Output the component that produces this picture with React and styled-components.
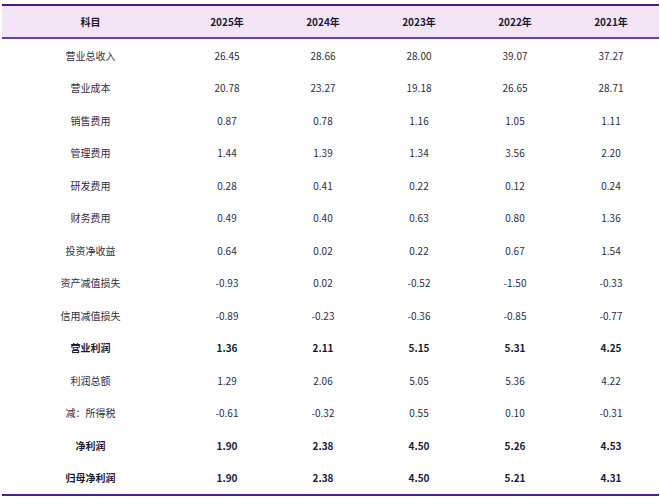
import React from "react"
import styled, {createGlobalStyle} from "styled-components"

const years = ["2025年", "2024年", "2023年", "2022年", "2021年"]

const rows = [
  {label: "营业总收入", values: ["26.45", "28.66", "28.00", "39.07", "37.27"]},
  {label: "营业成本", values: ["20.78", "23.27", "19.18", "26.65", "28.71"]},
  {label: "销售费用", values: ["0.87", "0.78", "1.16", "1.05", "1.11"]},
  {label: "管理费用", values: ["1.44", "1.39", "1.34", "3.56", "2.20"]},
  {label: "研发费用", values: ["0.28", "0.41", "0.22", "0.12", "0.24"]},
  {label: "财务费用", values: ["0.49", "0.40", "0.63", "0.80", "1.36"]},
  {label: "投资净收益", values: ["0.64", "0.02", "0.22", "0.67", "1.54"]},
  {label: "资产减值损失", values: ["-0.93", "0.02", "-0.52", "-1.50", "-0.33"]},
  {label: "信用减值损失", values: ["-0.89", "-0.23", "-0.36", "-0.85", "-0.77"]},
  {label: "营业利润", values: ["1.36", "2.11", "5.15", "5.31", "4.25"], bold: true},
  {label: "利润总额", values: ["1.29", "2.06", "5.05", "5.36", "4.22"]},
  {label: "减：所得税", values: ["-0.61", "-0.32", "0.55", "0.10", "-0.31"]},
  {label: "净利润", values: ["1.90", "2.38", "4.50", "5.26", "4.53"], bold: true},
  {label: "归母净利润", values: ["1.90", "2.38", "4.50", "5.21", "4.31"], bold: true},
]

const GlobalStyle = createGlobalStyle`
  body {
    margin: 0;
    background: #ffffff;
    font-family: "Noto Sans CJK SC", "Noto Sans", sans-serif;
  }
`

const Page = styled.div`
  padding: 4px 0 0 2px;
`

const Table = styled.table`
  width: 657px;
  border-collapse: collapse;
  table-layout: fixed;
  font-size: 10px;
  color: #2e2d44;
  border-bottom: 2px solid #4b1d8f;
`

const HeadRow = styled.tr`
  background: #f3e5f5;
  border-top: 2px solid #4a178c;
  border-bottom: 2px solid #6a3fa3;
`

const HeadCell = styled.th`
  height: 31px;
  padding: 0;
  text-align: center;
  font-weight: 700;
  color: #1c1a33;
`

const Cell = styled.td`
  height: 32.5px;
  padding: 0;
  text-align: center;
  font-weight: ${(props) => (props.bold ? 700 : 400)};
  color: ${(props) => (props.bold ? "#1c1a33" : "#2e2d44")};
`

const App = () => (
  <Page>
    <GlobalStyle />
    <Table>
      <colgroup>
        <col style={{width: 177}} />
        {years.map((y) => (
          <col key={y} style={{width: 96}} />
        ))}
      </colgroup>
      <thead>
        <HeadRow>
          <HeadCell>科目</HeadCell>
          {years.map((y) => (
            <HeadCell key={y}>{y}</HeadCell>
          ))}
        </HeadRow>
      </thead>
      <tbody>
        {rows.map((row) => (
          <tr key={row.label}>
            <Cell bold={row.bold}>{row.label}</Cell>
            {row.values.map((v, i) => (
              <Cell key={i} bold={row.bold}>
                {v}
              </Cell>
            ))}
          </tr>
        ))}
      </tbody>
    </Table>
  </Page>
)

export default App
